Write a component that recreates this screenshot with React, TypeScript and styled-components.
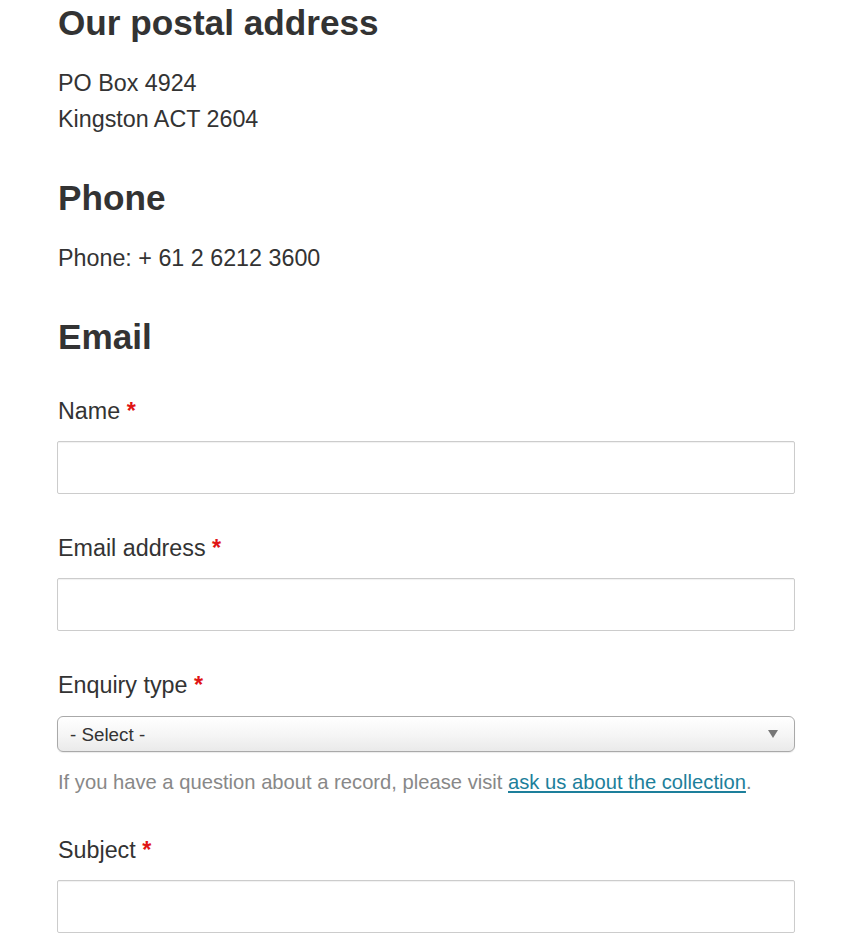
import styled, { createGlobalStyle } from "styled-components";

const GlobalStyle = createGlobalStyle`
  body {
    margin: 0;
    background: #ffffff;
    font-family: "Liberation Sans", Arial, sans-serif;
    color: #333333;
  }
`;

function App() {
  return (
    <>
      <GlobalStyle />
      <Page>
        <Heading>Our postal address</Heading>
        <Text>
          PO Box 4924
          <br />
          Kingston ACT 2604
        </Text>

        <Heading>Phone</Heading>
        <Text>Phone: + 61 2 6212 3600</Text>

        <Heading>Email</Heading>
        <Form onSubmit={(e) => e.preventDefault()}>
          <Field>
            <Label htmlFor="name">
              Name <Required>*</Required>
            </Label>
            <Input id="name" type="text" />
          </Field>

          <Field>
            <Label htmlFor="email">
              Email address <Required>*</Required>
            </Label>
            <Input id="email" type="email" />
          </Field>

          <Field>
            <Label htmlFor="enquiry">
              Enquiry type <Required>*</Required>
            </Label>
            <SelectWrap>
              <Select id="enquiry" defaultValue="">
                <option value="">- Select -</option>
              </Select>
              <Arrow />
            </SelectWrap>
            <Help>
              If you have a question about a record, please visit{" "}
              <Link href="#">ask us about the collection</Link>.
            </Help>
          </Field>

          <Field>
            <Label htmlFor="subject">
              Subject <Required>*</Required>
            </Label>
            <Input id="subject" type="text" />
          </Field>
        </Form>
      </Page>
    </>
  );
}

export default App;

const Page = styled.div`
  width: 738px;
  padding: 3px 0 0 57px;
`;

const Heading = styled.h2`
  margin: 0 0 22px 1px;
  font-size: 35.2px;
  line-height: 40px;
  font-weight: 700;
  color: #333333;
`;

const Text = styled.p`
  margin: 0 0 41px 1px;
  font-size: 23.3px;
  line-height: 36px;
`;

const Form = styled.form`
  display: flex;
  flex-direction: column;
  row-gap: 36px;
  margin-top: 36px;
`;

const Field = styled.div`
  display: flex;
  flex-direction: column;
`;

const Label = styled.label`
  margin: 0 0 12px 1px;
  font-size: 23.3px;
  line-height: 36px;
  color: #333333;
`;

const Required = styled.span`
  color: #e01515;
  font-weight: 700;
`;

const Input = styled.input`
  box-sizing: border-box;
  width: 100%;
  height: 53px;
  margin: 0;
  border: 1px solid #cccccc;
  border-radius: 2px;
  box-shadow: inset 0 1px 1px rgba(0, 0, 0, 0.06);
  background: #ffffff;
  outline: none;
`;

const SelectWrap = styled.div`
  position: relative;
  width: 100%;
  margin-top: 1px;
`;

const Select = styled.select`
  appearance: none;
  box-sizing: border-box;
  width: 100%;
  height: 36px;
  margin: 0;
  padding: 0 36px 0 12px;
  border: 1px solid #a9a9a9;
  border-radius: 6px;
  background: linear-gradient(#ffffff 0%, #f6f6f6 50%, #eaeaea 100%);
  box-shadow: 0 1px 1px rgba(0, 0, 0, 0.08);
  font-family: "Liberation Sans", Arial, sans-serif;
  font-size: 18.8px;
  color: #333333;
  outline: none;
`;

const Arrow = styled.span`
  position: absolute;
  right: 17px;
  top: 14px;
  width: 0;
  height: 0;
  border-left: 5px solid transparent;
  border-right: 5px solid transparent;
  border-top: 8px solid #777777;
  pointer-events: none;
`;

const Help = styled.p`
  margin: 14px 0 -2px 1px;
  font-size: 20.2px;
  line-height: 32px;
  color: #888888;
`;

const Link = styled.a`
  color: #1d7f9b;
  text-decoration: underline;
`;
